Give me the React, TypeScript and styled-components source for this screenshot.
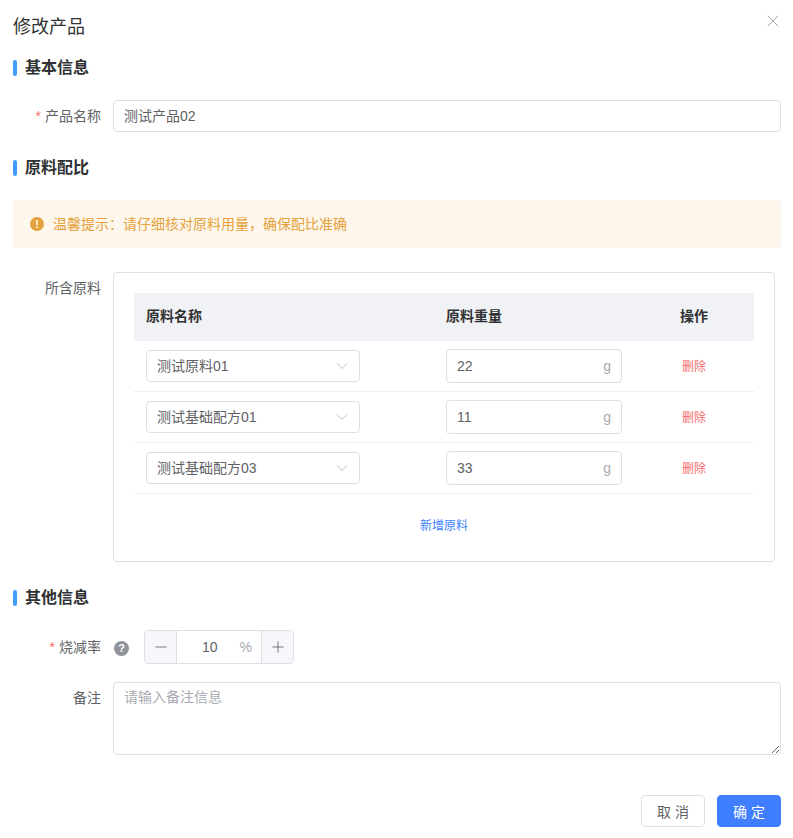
import React from "react";
import styled, { createGlobalStyle } from "styled-components";
import { X, ChevronDown, Minus, Plus } from "lucide-react";

const GlobalStyle = createGlobalStyle`
  html, body {
    margin: 0;
    padding: 0;
    background: #fff;
  }
  * {
    box-sizing: border-box;
  }
  body, input, textarea, button {
    font-family: "Liberation Sans", "Noto Sans CJK SC", sans-serif;
  }
`;

const materiales = [
  { nombre: "测试原料01", peso: "22" },
  { nombre: "测试基础配方01", peso: "11" },
  { nombre: "测试基础配方03", peso: "33" },
];

const App: React.FC = () => {
  return (
    <>
      <GlobalStyle />
      <Dialog>
        <Header>
          <Title>修改产品</Title>
          <CloseButton aria-label="关闭">
            <X size={20} strokeWidth={1} />
          </CloseButton>
        </Header>

        <SectionTitle>基本信息</SectionTitle>
        <FormRow $top={24}>
          <Label $required>产品名称</Label>
          <TextInput readOnly value="测试产品02" />
        </FormRow>

        <SectionTitle $top={28}>原料配比</SectionTitle>
        <Alert>
          <AlertIcon>!</AlertIcon>
          <span>温馨提示：请仔细核对原料用量，确保配比准确</span>
        </Alert>

        <FormRow $top={24}>
          <Label>所含原料</Label>
          <MaterialBox>
            <MaterialTable>
              <thead>
                <tr>
                  <HeadCell $width={300}>原料名称</HeadCell>
                  <HeadCell $width={200}>原料重量</HeadCell>
                  <HeadCell $center>操作</HeadCell>
                </tr>
              </thead>
              <tbody>
                {materiales.map((m) => (
                  <tr key={m.nombre}>
                    <BodyCell>
                      <SelectBox>
                        <span>{m.nombre}</span>
                        <ChevronDown size={20} strokeWidth={0.9} color="#a8abb2" />
                      </SelectBox>
                    </BodyCell>
                    <BodyCell>
                      <WeightBox>
                        <WeightInput readOnly value={m.peso} />
                        <Unit>g</Unit>
                      </WeightBox>
                    </BodyCell>
                    <BodyCell $center>
                      <DeleteLink>删除</DeleteLink>
                    </BodyCell>
                  </tr>
                ))}
              </tbody>
            </MaterialTable>
            <AddRow>
              <AddLink>新增原料</AddLink>
            </AddRow>
          </MaterialBox>
        </FormRow>

        <SectionTitle $top={28}>其他信息</SectionTitle>
        <FormRow $top={24}>
          <ShortLabel $required>烧减率</ShortLabel>
          <HelpIcon>?</HelpIcon>
          <Stepper>
            <StepButton $side="left">
              <Minus size={18} strokeWidth={1.1} />
            </StepButton>
            <StepValue>
              <StepNumber>10</StepNumber>
              <StepUnit>%</StepUnit>
            </StepValue>
            <StepButton $side="right">
              <Plus size={18} strokeWidth={1.1} />
            </StepButton>
          </Stepper>
        </FormRow>
        <FormRow $top={18}>
          <Label>备注</Label>
          <Notes placeholder="请输入备注信息" />
        </FormRow>

        <Footer>
          <CancelButton>取 消</CancelButton>
          <ConfirmButton>确 定</ConfirmButton>
        </Footer>
      </Dialog>
    </>
  );
};

export default App;

const Dialog = styled.div`
  width: 793px;
  height: 838px;
  padding: 15px 12px 0 13px;
  background: #fff;
  overflow: hidden;
`;

const Header = styled.div`
  display: flex;
  justify-content: space-between;
  align-items: flex-start;
  height: 24px;
`;

const Title = styled.div`
  font-size: 18px;
  line-height: 24px;
  color: #303133;
`;

const CloseButton = styled.div`
  display: flex;
  margin: -4px -2px 0 0;
  color: #909399;
`;

const SectionTitle = styled.div<{ $top?: number }>`
  display: flex;
  align-items: center;
  height: 16px;
  margin-top: ${({ $top }) => $top ?? 21}px;
  font-size: 16px;
  line-height: 16px;
  font-weight: 700;
  color: #303133;

  &::before {
    content: "";
    width: 4px;
    height: 16px;
    margin-right: 8px;
    border-radius: 2px;
    background: #409eff;
  }
`;

const FormRow = styled.div<{ $top?: number }>`
  display: flex;
  align-items: flex-start;
  margin-top: ${({ $top }) => $top ?? 0}px;
`;

const Label = styled.label<{ $required?: boolean }>`
  flex: none;
  width: 88px;
  font-size: 14px;
  line-height: 32px;
  text-align: right;
  color: #606266;
  margin-right: 12px;

  &::before {
    content: ${({ $required }) => ($required ? '"*"' : "none")};
    margin-right: 4px;
    color: #f56c6c;
  }
`;

const ShortLabel = styled(Label)`
  line-height: 34px;
`;

const TextInput = styled.input`
  width: 668px;
  height: 32px;
  padding: 0 10px 2px;
  border: 1px solid #dcdfe6;
  border-radius: 4px;
  outline: none;
  font-size: 14px;
  color: #606266;
`;

const Alert = styled.div`
  display: flex;
  align-items: center;
  height: 48px;
  margin-top: 24px;
  padding-left: 17px;
  border-radius: 4px;
  background: #fdf6ec;
  font-size: 14px;
  line-height: 20px;
  color: #e6a23c;
`;

const AlertIcon = styled.span`
  display: flex;
  align-items: center;
  justify-content: center;
  width: 14px;
  height: 14px;
  margin-right: 9px;
  border-radius: 50%;
  background: #e6a23c;
  color: #fdf6ec;
  font-size: 11px;
  line-height: 14px;
  font-weight: 700;
`;

const MaterialBox = styled.div`
  width: 662px;
  height: 290px;
  padding: 20px 20px 0;
  border: 1px solid #dcdfe6;
  border-radius: 4px;
`;

const MaterialTable = styled.table`
  width: 620px;
  border-collapse: separate;
  border-spacing: 0;
  table-layout: fixed;
`;

const HeadCell = styled.th<{ $width?: number; $center?: boolean }>`
  width: ${({ $width }) => ($width ? `${$width}px` : "auto")};
  height: 48px;
  padding: ${({ $center }) => ($center ? "0 0 2px" : "0 12px 2px")};
  background: #f0f2f5;
  font-size: 14px;
  line-height: 20px;
  font-weight: 700;
  text-align: ${({ $center }) => ($center ? "center" : "left")};
  color: #303133;
`;

const BodyCell = styled.td<{ $center?: boolean }>`
  height: 51px;
  padding: ${({ $center }) => ($center ? "0" : "0 12px")};
  border-bottom: 1px solid #ebeef5;
  text-align: ${({ $center }) => ($center ? "center" : "left")};
`;

const SelectBox = styled.div`
  display: flex;
  align-items: center;
  justify-content: space-between;
  width: 214px;
  height: 32px;
  padding: 0 7px 0 10px;
  border: 1px solid #dcdfe6;
  border-radius: 4px;
  font-size: 14px;
  line-height: 20px;
  color: #606266;
`;

const WeightBox = styled.div`
  display: flex;
  align-items: center;
  width: 176px;
  height: 34px;
  padding: 0 10px;
  border: 1px solid #dcdfe6;
  border-radius: 4px;
`;

const WeightInput = styled.input`
  flex: 1;
  min-width: 0;
  padding: 0;
  border: none;
  outline: none;
  font-size: 14px;
  color: #606266;
`;

const Unit = styled.span`
  font-size: 14px;
  line-height: 20px;
  color: #a8abb2;
`;

const DeleteLink = styled.a`
  font-size: 12px;
  line-height: 16px;
  color: #f56c6c;
`;

const AddRow = styled.div`
  display: flex;
  justify-content: center;
  margin-top: 24px;
`;

const AddLink = styled.a`
  font-size: 12px;
  line-height: 16px;
  color: #3d7fff;
`;

const HelpIcon = styled.span`
  flex: none;
  display: flex;
  align-items: center;
  justify-content: center;
  width: 15px;
  height: 15px;
  margin: 11px 15px 0 1px;
  border-radius: 50%;
  background: #909399;
  color: #fff;
  font-size: 11px;
  line-height: 15px;
  font-weight: 700;
`;

const Stepper = styled.div`
  display: flex;
  width: 150px;
  height: 34px;
  border: 1px solid #dcdfe6;
  border-radius: 4px;
  overflow: hidden;
`;

const StepButton = styled.div<{ $side: "left" | "right" }>`
  flex: none;
  display: flex;
  align-items: center;
  justify-content: center;
  width: 32px;
  background: #f5f7fa;
  color: #606266;
  border-${({ $side }) => ($side === "left" ? "right" : "left")}: 1px solid #dcdfe6;
`;

const StepValue = styled.div`
  flex: 1;
  display: flex;
  align-items: center;
  justify-content: flex-end;
  padding-right: 9px;
  font-size: 14px;
  line-height: 20px;
`;

const StepNumber = styled.span`
  margin-right: 22px;
  color: #606266;
`;

const StepUnit = styled.span`
  color: #a8abb2;
`;

const Notes = styled.textarea`
  display: block;
  width: 668px;
  height: 73px;
  padding: 4px 10px;
  border: 1px solid #dcdfe6;
  border-radius: 4px;
  outline: none;
  font-size: 14px;
  line-height: 20px;
  color: #606266;

  &::placeholder {
    color: #a8abb2;
  }
`;

const Footer = styled.div`
  display: flex;
  justify-content: flex-end;
  gap: 12px;
  margin-top: 40px;
`;

const CancelButton = styled.button`
  width: 64px;
  height: 32px;
  padding: 0;
  border: 1px solid #dcdfe6;
  border-radius: 4px;
  background: #fff;
  font-size: 14px;
  color: #606266;
`;

const ConfirmButton = styled.button`
  width: 64px;
  height: 32px;
  padding: 0;
  border: 1px solid #3f7fff;
  border-radius: 4px;
  background: #3f7fff;
  font-size: 14px;
  color: #fff;
`;
